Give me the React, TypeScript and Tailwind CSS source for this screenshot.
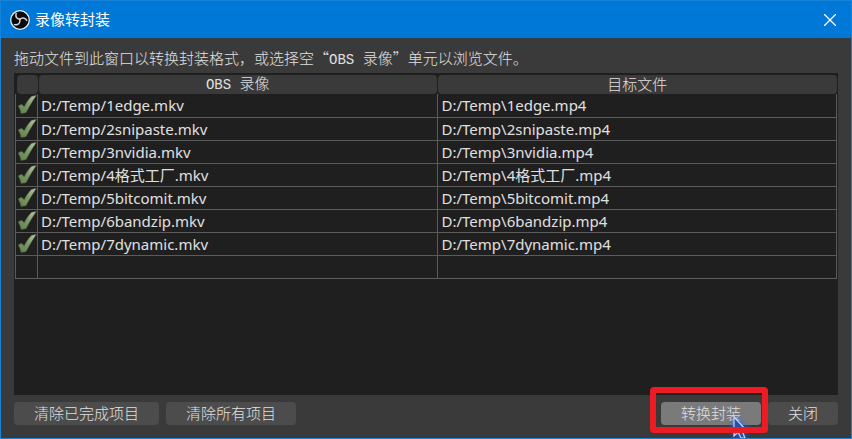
import React, { useState } from "react"

interface RemuxItem {
  source: string
  target: string
}

const items: RemuxItem[] = [
  { source: "D:/Temp/1edge.mkv", target: "D:/Temp\\1edge.mp4" },
  { source: "D:/Temp/2snipaste.mkv", target: "D:/Temp\\2snipaste.mp4" },
  { source: "D:/Temp/3nvidia.mkv", target: "D:/Temp\\3nvidia.mp4" },
  { source: "D:/Temp/4格式工厂.mkv", target: "D:/Temp\\4格式工厂.mp4" },
  { source: "D:/Temp/5bitcomit.mkv", target: "D:/Temp\\5bitcomit.mp4" },
  { source: "D:/Temp/6bandzip.mkv", target: "D:/Temp\\6bandzip.mp4" },
  { source: "D:/Temp/7dynamic.mkv", target: "D:/Temp\\7dynamic.mp4" },
]

const ObsLogo: React.FC = () => (
  <svg className="size-5" viewBox="0 0 20 20" aria-hidden="true">
    <circle cx="10" cy="10" r="9.3" fill="#0b0b0d" stroke="#e8eef5" strokeWidth="1.3" />
    <g fill="none" stroke="#d6d6d8" strokeWidth="1.5" strokeLinecap="round">
      <path d="M6.2 3.4c-1 3 .4 5.6 3.6 5.900" />
      <path d="M16.8 10.4c-1.5-2.8-4.7-3.4-7-1.1" />
      <path d="M4.6 14.6c3.3 1 6-1.3 5.2-5.300" />
    </g>
  </svg>
)

const TickMark: React.FC = () => (
  <svg className="block h-[22px] w-[21px]" viewBox="0 0 21 22" aria-hidden="true">
    <defs>
      <linearGradient id="tick" x1="0" y1="1" x2="1" y2="0">
        <stop offset="0" stopColor="#5f8048" />
        <stop offset="0.5" stopColor="#7c9868" />
        <stop offset="1" stopColor="#bccab2" />
      </linearGradient>
    </defs>
    <path
      d="M2 12 5.2 10.200c1.400.4 2.200 1.300 2.900 2.500C10.200 8.800 12.800 4.800 15.500 2.300L20.500 1.300C17 6.500 13.500 12 10 18.800l-5 .8C4.400 16.500 3.600 14.200 2 12Z"
      fill="url(#tick)"
      stroke="#41532f"
      strokeWidth="0.5"
    />
  </svg>
)

const Pointer: React.FC = () => (
  <svg
    className="pointer-events-none absolute top-3.5 left-[70px] h-[23px] w-5 drop-shadow-[0_0_3px_#2563ff]"
    viewBox="0 0 20 23"
    aria-hidden="true"
  >
    <path d="M3 1v19l4-4 3 6h4l-3-7h5Z" fill="#2a509f" stroke="#c4d8ff" strokeWidth="1.2" />
  </svg>
)

interface DialogButtonProps {
  className?: string
  children: React.ReactNode
  onClick?: () => void
}

const DialogButton: React.FC<DialogButtonProps> = ({ className = "bg-[#4c4c4c]", children, onClick }) => (
  <button
    type="button"
    onClick={onClick}
    className={`h-[23px] rounded px-5 pb-0.5 font-['Noto_Sans_CJK_SC',sans-serif] text-[15px] leading-5 whitespace-nowrap ${className}`}
  >
    {children}
  </button>
)

const App: React.FC = () => {
  const [rows, setRows] = useState(items)

  return (
    <div className="flex h-screen flex-col overflow-hidden border border-[#1883d7] bg-[#3a3a3a] font-['Liberation_Mono','Noto_Sans_CJK_SC',monospace] text-[15px] font-light text-[#e1e0e1]">
      <header className="flex h-[37px] shrink-0 items-center bg-[#0078d7] pr-[15px] pl-[9px] text-white">
        <ObsLogo />
        <h1 className="ml-[5px] pb-0.5 font-['Noto_Sans_CJK_SC',sans-serif] text-[15px] leading-[22px] font-normal">
          录像转封装
        </h1>
        <button type="button" aria-label="关闭窗口" className="ml-auto">
          <svg className="size-3" viewBox="0 0 12 12" aria-hidden="true">
            <path d="M0 0 12 12M12 0 0 12" stroke="white" strokeWidth="1.3" />
          </svg>
        </button>
      </header>

      <main className="flex min-h-0 flex-1 flex-col px-[13px] pb-[13px]">
        <p className="h-[35px] shrink-0 pt-[9px] leading-[22px] whitespace-nowrap">
          拖动文件到此窗口以转换封装格式，或选择空
          <span className="font-['Noto_Sans_CJK_SC',sans-serif]">“</span>
          <span className="text-sm">OBS </span>录像
          <span className="font-['Noto_Sans_CJK_SC',sans-serif]">”</span>
          单元以浏览文件。
        </p>

        <div className="min-h-0 flex-1 overflow-hidden bg-[#1f1f1f] px-px pt-px">
          <table className="w-full table-fixed border-collapse">
            <colgroup>
              <col className="w-[22px]" />
              <col />
              <col />
            </colgroup>
            <thead>
              <tr className="h-5">
                <th className="p-0 pl-px">
                  <div className="h-[19px] rounded bg-[#3a3a3a]" />
                </th>
                <th className="p-0 pl-px font-light">
                  <div className="h-[19px] rounded bg-[#3a3a3a] leading-[19px]">
                    <span className="text-sm">OBS </span>录像
                  </div>
                </th>
                <th className="p-0 pl-px font-light">
                  <div className="h-[19px] rounded bg-[#3a3a3a] font-['Noto_Sans_CJK_SC',sans-serif] leading-[17px]">
                    目标文件
                  </div>
                </th>
              </tr>
            </thead>
            <tbody className="font-['Noto_Sans','Noto_Sans_CJK_SC',sans-serif] font-normal">
              {rows.map((row) => (
                <tr key={row.source} className="h-[23px]">
                  <td className="border border-t-0 border-[#5b5b5b] p-0">
                    <TickMark />
                  </td>
                  <td className="border border-t-0 border-[#5b5b5b] p-0 pl-[3px] leading-[22px]">{row.source}</td>
                  <td className="border border-t-0 border-[#5b5b5b] p-0 pl-1 leading-[22px]">{row.target}</td>
                </tr>
              ))}
              <tr className="h-[23px]">
                <td className="border border-[#5b5b5b]" />
                <td className="border border-[#5b5b5b]" />
                <td className="border border-[#5b5b5b]" />
              </tr>
            </tbody>
          </table>
        </div>

        <footer className="mt-[7px] flex gap-[7px]">
          <DialogButton>清除已完成项目</DialogButton>
          <DialogButton onClick={() => setRows([])}>清除所有项目</DialogButton>
          <div className="relative ml-auto flex">
            <DialogButton className="bg-[#7a7a7a]">转换封装</DialogButton>
            <div className="pointer-events-none absolute -top-[15px] -right-[7px] -bottom-2 -left-[11px] z-10 rounded-sm border-6 border-[#ed1c24]" />
            <Pointer />
          </div>
          <DialogButton>关闭</DialogButton>
        </footer>
      </main>
    </div>
  )
}

export default App
